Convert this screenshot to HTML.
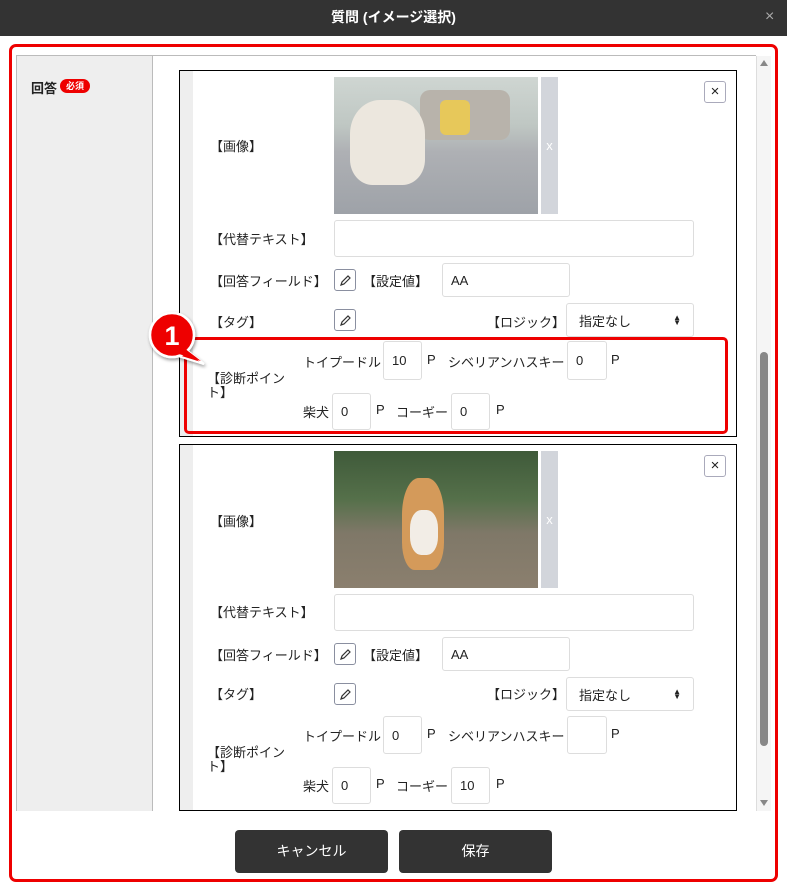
<!DOCTYPE html>
<html><head><meta charset="utf-8"><style>
*{box-sizing:border-box;margin:0;padding:0}
body{width:787px;height:889px;background:#fff;font-family:"Liberation Sans","Noto Sans CJK JP",sans-serif;font-size:13px;color:#222;position:relative;overflow:hidden}
.a{position:absolute}
.hdr{left:0;top:0;width:787px;height:36px;background:#333;color:#fff;font-weight:bold;font-size:14px;text-align:center;line-height:34px}
.inp{position:absolute;border:1px solid #ddd;border-radius:3px;background:#fff;font-size:13px;padding-left:8px;display:flex;align-items:center}
.pen{position:absolute;width:22px;height:22px;border:1px solid #8a8fa0;border-radius:3px;background:#fff}
.lbl{position:absolute;font-size:13px;white-space:nowrap}
.card{position:absolute;left:179px;width:558px;height:367px;border:1px solid #000;background:#fff;overflow:hidden}
.strip{position:absolute;left:0;top:0;width:13px;height:100%;background:#eee}
.btn{position:absolute;top:830px;width:153px;height:43px;background:#333;color:#fff;border-radius:4px;text-align:center;line-height:43px;font-size:14px}
</style></head><body>
<div class="a hdr">質問 (イメージ選択)</div>
<div class="a" style="left:765px;top:8px;color:#aaa;font-size:16px">×</div>
<div class="a" style="left:9px;top:44px;width:769px;height:838px;border:3px solid #e00;border-radius:7px"></div>
<div class="a" style="left:16px;top:55px;width:740px;height:1px;background:#bbb"></div>
<div class="a" style="left:16px;top:56px;width:137px;height:755px;background:#eee;border-left:1px solid #bbb;border-right:1px solid #bbb"></div>
<div class="a" style="left:31px;top:78px;font-weight:bold;font-size:13px">回答</div>
<div class="a" style="left:60px;top:79px;width:30px;height:14px;background:#e00;border-radius:7px;color:#fff;font-size:9px;font-weight:bold;text-align:center;line-height:14px">必須</div>
<!-- scrollbar -->
<div class="a" style="left:756px;top:56px;width:15px;height:755px;background:#f5f5f5;border-left:1px solid #ddd"></div>
<div class="a" style="left:760px;top:60px;width:0;height:0;border-left:4px solid transparent;border-right:4px solid transparent;border-bottom:6px solid #888"></div>
<div class="a" style="left:760px;top:352px;width:8px;height:394px;background:#888;border-radius:4px"></div>
<div class="a" style="left:760px;top:800px;width:0;height:0;border-left:4px solid transparent;border-right:4px solid transparent;border-top:6px solid #888"></div>

<!-- card 1 -->
<div class="card" style="top:70px"><div class="strip"></div></div>
<div class="a" style="left:334px;top:77px;width:204px;height:137px;background:linear-gradient(180deg,#cfd6d2 0%,#bfc7c3 35%,#aeb0b4 55%,#9ea2a8 100%)"></div>
<div class="a" style="left:420px;top:90px;width:90px;height:50px;background:#b8b3ab;border-radius:10px"></div>
<div class="a" style="left:440px;top:100px;width:30px;height:35px;background:#e7c85a;border-radius:6px"></div>
<div class="a" style="left:350px;top:100px;width:75px;height:85px;background:#ece7de;border-radius:40% 40% 30% 30%"></div>
<div class="a" style="left:541px;top:77px;width:17px;height:137px;background:#d2d5db;color:#fff;text-align:center;line-height:137px;font-size:13px">x</div>
<div class="a" style="left:704px;top:81px;width:22px;height:22px;border:1px solid #aab;border-radius:3px;text-align:center;line-height:19px;font-size:15px">×</div>
<div class="lbl" style="left:210px;top:136px">【画像】</div>
<div class="lbl" style="left:210px;top:229px">【代替テキスト】</div>
<div class="inp" style="left:334px;top:220px;width:360px;height:37px"></div>
<div class="lbl" style="left:210px;top:271px">【回答フィールド】</div>
<div class="pen" style="left:334px;top:269px"><svg width="20" height="20"><path d="M6 15 L7 12 L13 6 L15 8 L9 14 Z" fill="none" stroke="#333" stroke-width="1.2"/></svg></div>
<div class="lbl" style="left:363px;top:271px">【設定値】</div>
<div class="inp" style="left:442px;top:263px;width:128px;height:34px">AA</div>
<div class="lbl" style="left:210px;top:312px">【タグ】</div>
<div class="pen" style="left:334px;top:309px"><svg width="20" height="20"><path d="M6 15 L7 12 L13 6 L15 8 L9 14 Z" fill="none" stroke="#333" stroke-width="1.2"/></svg></div>
<div class="lbl" style="left:487px;top:312px">【ロジック】</div>
<div class="inp" style="left:566px;top:303px;width:128px;height:34px;padding-left:12px">指定なし<span style="position:absolute;right:12px;font-size:8px;line-height:5px">▲<br>▼</span></div>
<div class="lbl" style="left:207px;top:372px;line-height:14px">【診断ポイン<br>ト】</div>
<div class="lbl" style="left:303px;top:352px">トイプードル</div>
<div class="inp" style="left:383px;top:341px;width:39px;height:39px">10</div>
<div class="lbl" style="left:427px;top:352px">P</div>
<div class="lbl" style="left:448px;top:352px">シベリアンハスキー</div>
<div class="inp" style="left:567px;top:341px;width:40px;height:39px">0</div>
<div class="lbl" style="left:611px;top:352px">P</div>
<div class="lbl" style="left:303px;top:402px">柴犬</div>
<div class="inp" style="left:332px;top:393px;width:39px;height:37px">0</div>
<div class="lbl" style="left:376px;top:402px">P</div>
<div class="lbl" style="left:396px;top:402px">コーギー</div>
<div class="inp" style="left:451px;top:393px;width:39px;height:37px">0</div>
<div class="lbl" style="left:496px;top:402px">P</div>
<div class="a" style="left:184px;top:337px;width:544px;height:97px;border:3px solid #e00;border-radius:5px"></div>
<svg class="a" style="left:144px;top:308px" width="68" height="62"><defs><filter id="s"><feDropShadow dx="1" dy="2" stdDeviation="1.5" flood-opacity="0.4"/></filter></defs><g filter="url(#s)"><path d="M40 40 L60 56 L34 48 Z" fill="#e00" stroke="#fff" stroke-width="2"/><circle cx="28" cy="27" r="22" fill="#e00" stroke="#fff" stroke-width="2.5"/><path d="M40 40 L57 53 L35 46 Z" fill="#e00"/></g><text x="28" y="37" text-anchor="middle" font-family="Liberation Sans" font-size="27" font-weight="bold" fill="#fff">1</text></svg>

<!-- card 2 -->
<div class="card" style="top:444px"><div class="strip"></div></div>
<div class="a" style="left:334px;top:451px;width:204px;height:137px;background:linear-gradient(180deg,#3f5a3a 0%,#55704a 35%,#7f7868 60%,#8b7f6e 100%)"></div>
<div class="a" style="left:402px;top:478px;width:42px;height:92px;background:#d49a5a;border-radius:40% 40% 30% 30%"></div>
<div class="a" style="left:410px;top:510px;width:28px;height:45px;background:#f2ede6;border-radius:40%"></div>
<div class="a" style="left:541px;top:451px;width:17px;height:137px;background:#d2d5db;color:#fff;text-align:center;line-height:137px;font-size:13px">x</div>
<div class="a" style="left:704px;top:455px;width:22px;height:22px;border:1px solid #aab;border-radius:3px;text-align:center;line-height:19px;font-size:15px">×</div>
<div class="lbl" style="left:210px;top:511px">【画像】</div>
<div class="lbl" style="left:210px;top:602px">【代替テキスト】</div>
<div class="inp" style="left:334px;top:594px;width:360px;height:37px"></div>
<div class="lbl" style="left:210px;top:645px">【回答フィールド】</div>
<div class="pen" style="left:334px;top:643px"><svg width="20" height="20"><path d="M6 15 L7 12 L13 6 L15 8 L9 14 Z" fill="none" stroke="#333" stroke-width="1.2"/></svg></div>
<div class="lbl" style="left:363px;top:645px">【設定値】</div>
<div class="inp" style="left:442px;top:637px;width:128px;height:34px">AA</div>
<div class="lbl" style="left:210px;top:684px">【タグ】</div>
<div class="pen" style="left:334px;top:683px"><svg width="20" height="20"><path d="M6 15 L7 12 L13 6 L15 8 L9 14 Z" fill="none" stroke="#333" stroke-width="1.2"/></svg></div>
<div class="lbl" style="left:487px;top:684px">【ロジック】</div>
<div class="inp" style="left:566px;top:677px;width:128px;height:34px;padding-left:12px">指定なし<span style="position:absolute;right:12px;font-size:8px;line-height:5px">▲<br>▼</span></div>
<div class="lbl" style="left:207px;top:746px;line-height:14px">【診断ポイン<br>ト】</div>
<div class="lbl" style="left:303px;top:726px">トイプードル</div>
<div class="inp" style="left:383px;top:716px;width:39px;height:38px">0</div>
<div class="lbl" style="left:427px;top:726px">P</div>
<div class="lbl" style="left:448px;top:726px">シベリアンハスキー</div>
<div class="inp" style="left:567px;top:716px;width:40px;height:38px"></div>
<div class="lbl" style="left:611px;top:726px">P</div>
<div class="lbl" style="left:303px;top:776px">柴犬</div>
<div class="inp" style="left:332px;top:767px;width:39px;height:37px">0</div>
<div class="lbl" style="left:376px;top:776px">P</div>
<div class="lbl" style="left:396px;top:776px">コーギー</div>
<div class="inp" style="left:451px;top:767px;width:39px;height:37px">10</div>
<div class="lbl" style="left:496px;top:776px">P</div>
<div class="a" style="left:16px;top:811px;width:740px;height:20px;background:#fff"></div>

<div class="btn" style="left:235px">キャンセル</div>
<div class="btn" style="left:399px">保存</div>
</body></html>
